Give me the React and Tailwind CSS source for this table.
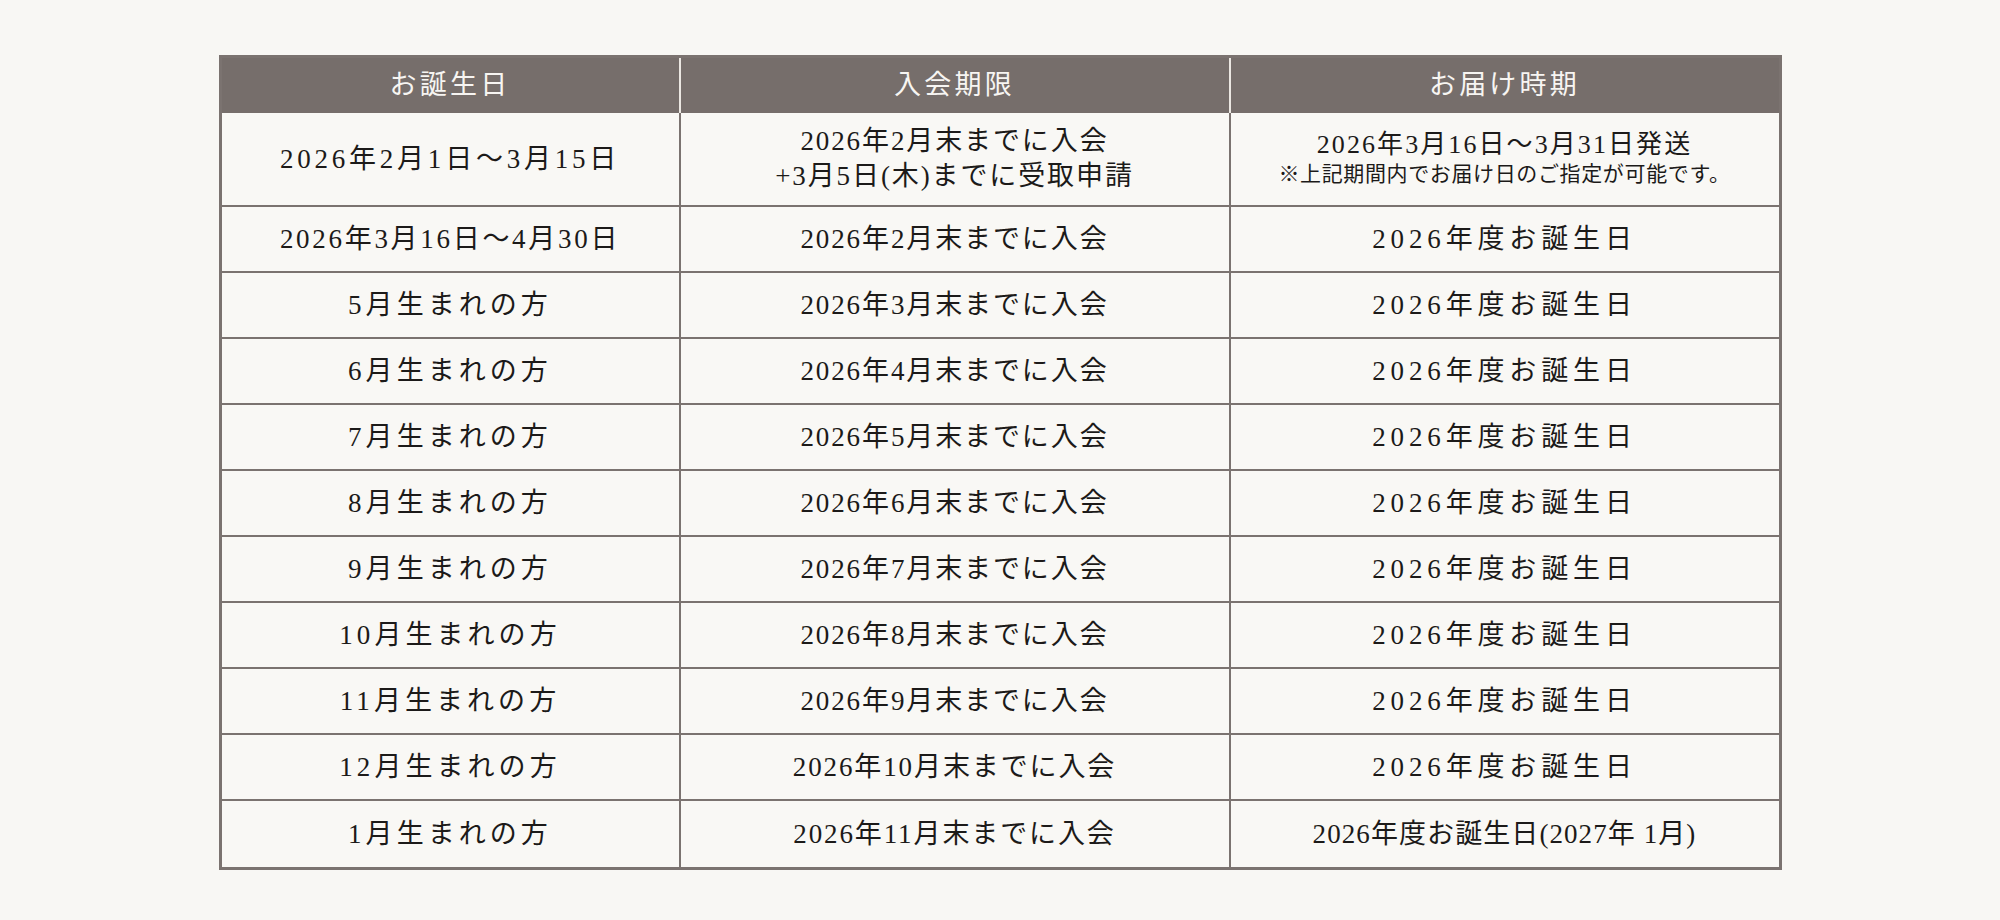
import React from "react";

const rows = [
    { birth: "2026年2月1日〜3月15日", birthCls: "tracking-[0.14em]", deadline: ["2026年2月末までに入会", "+3月5日(木)までに受取申請"], delivery: "first" },
    { birth: "2026年3月16日〜4月30日", birthCls: "tracking-[0.1em]", deadline: ["2026年2月末までに入会"], delivery: "2026年度お誕生日" },
    { birth: "5月生まれの方", deadline: ["2026年3月末までに入会"], delivery: "2026年度お誕生日" },
    { birth: "6月生まれの方", deadline: ["2026年4月末までに入会"], delivery: "2026年度お誕生日" },
    { birth: "7月生まれの方", deadline: ["2026年5月末までに入会"], delivery: "2026年度お誕生日" },
    { birth: "8月生まれの方", deadline: ["2026年6月末までに入会"], delivery: "2026年度お誕生日" },
    { birth: "9月生まれの方", deadline: ["2026年7月末までに入会"], delivery: "2026年度お誕生日" },
    { birth: "10月生まれの方", deadline: ["2026年8月末までに入会"], delivery: "2026年度お誕生日" },
    { birth: "11月生まれの方", deadline: ["2026年9月末までに入会"], delivery: "2026年度お誕生日" },
    { birth: "12月生まれの方", deadline: ["2026年10月末までに入会"], delivery: "2026年度お誕生日" },
    { birth: "1月生まれの方", deadline: ["2026年11月末までに入会"], delivery: "last" },
];

function Delivery({ value }) {
    if (value === "first") {
        return (
            <div className="flex flex-col items-center">
                <span className="text-[26px] leading-[31px] tracking-[0.08em]">2026年3月16日〜3月31日発送</span>
                <span className="text-[21px] leading-[29px] tracking-[0.03em]">※上記期間内でお届け日のご指定が可能です。</span>
            </div>
        );
    }
    if (value === "last") {
        return <span className="tracking-[0.04em]">2026年度お誕生日(2027年 1月)</span>;
    }
    return <span className="tracking-[0.18em]">{value}</span>;
}

export default function App() {
    return (
        <div
            className="min-h-screen bg-[#f8f7f4] pt-[55px] flex justify-center text-[#1c1a19]"
            style={{ fontFamily: '"Liberation Serif", "Noto Sans CJK JP", serif' }}
        >
            <table className="w-[1563px] h-fit table-fixed border-separate border-spacing-0 border-[3px] border-[#7b7370] text-[27px]">
                <colgroup>
                    <col className="w-[459px]" />
                    <col className="w-[550px]" />
                    <col className="w-[548px]" />
                </colgroup>
                <thead>
                    <tr className="bg-[#766e6b] text-[#f7f5f2]">
                        <th className="h-[55px] p-0 font-normal tracking-[0.12em] border-r-2 border-[#ebe7e2]">お誕生日</th>
                        <th className="h-[55px] p-0 font-normal tracking-[0.12em] border-r-2 border-[#ebe7e2]">入会期限</th>
                        <th className="h-[55px] p-0 font-normal tracking-[0.12em]">お届け時期</th>
                    </tr>
                </thead>
                <tbody>
                    {rows.map((r, i) => {
                        const last = i === rows.length - 1;
                        const h = i === 0 ? "h-[94px]" : "h-[66px]";
                        const b = last ? "" : "border-b-2";
                        return (
                            <tr key={i} className="bg-[#f9f8f5]">
                                <td className={`${h} ${b} p-0 text-center border-r-2 border-[#7b7370] ${r.birthCls || "tracking-[0.15em]"}`}>
                                    {r.birth}
                                </td>
                                <td className={`${h} ${b} p-0 text-center border-r-2 border-[#7b7370]`}>
                                    {r.deadline.map((line, j) => (
                                        <div key={j} className="leading-[35px] tracking-[0.07em]">{line}</div>
                                    ))}
                                </td>
                                <td className={`${h} ${b} p-0 text-center border-[#7b7370]`}>
                                    <Delivery value={r.delivery} />
                                </td>
                            </tr>
                        );
                    })}
                </tbody>
            </table>
        </div>
    );
}
